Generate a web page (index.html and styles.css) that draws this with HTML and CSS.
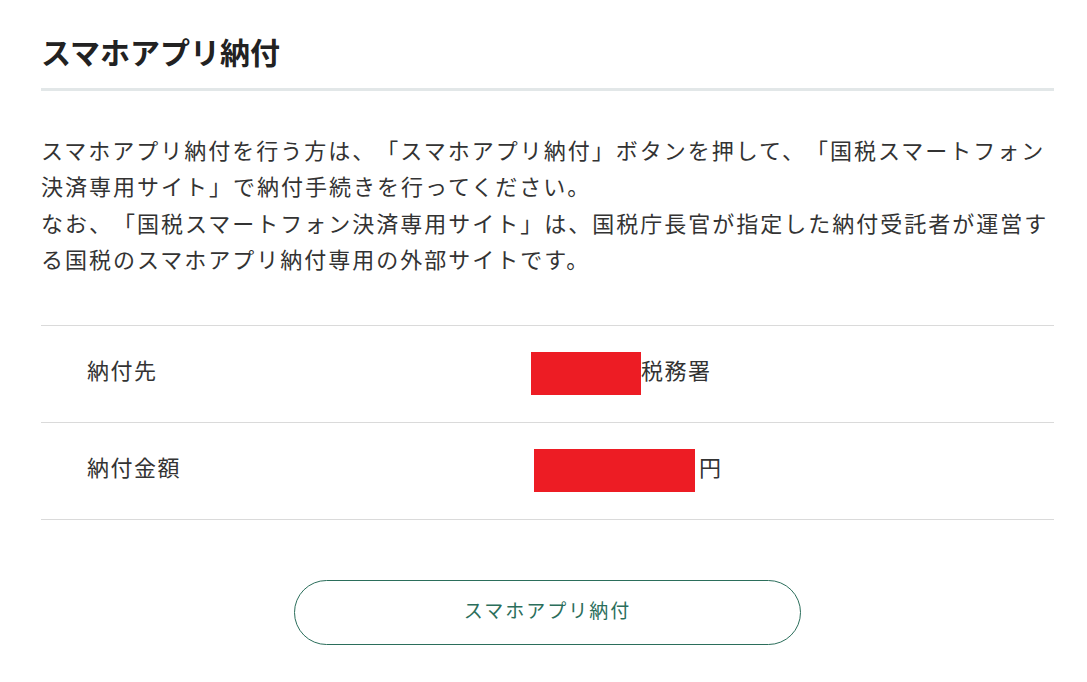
FILE: index.html
```html
<!DOCTYPE html>
<html lang="ja">
<head>
    <meta charset="UTF-8">
    <title>スマホアプリ納付</title>
    <link rel="stylesheet" href="styles.css">
</head>
<body>
    <div class="page">
        <h1 class="title">スマホアプリ納付</h1>
        <p class="lead">スマホアプリ納付を行う方は、「スマホアプリ納付」ボタンを押して、「国税スマートフォン決済専用サイト」で納付手続きを行ってください。<br>なお、「国税スマートフォン決済専用サイト」は、国税庁長官が指定した納付受託者が運営する国税のスマホアプリ納付専用の外部サイトです。</p>
        <div class="info">
            <div class="info-row">
                <div class="info-label">納付先</div>
                <div class="info-value"><span class="mask mask-office"></span><span class="unit">税務署</span></div>
            </div>
            <div class="info-row">
                <div class="info-label">納付金額</div>
                <div class="info-value"><span class="mask mask-amount"></span><span class="unit">円</span></div>
            </div>
        </div>
        <div class="actions">
            <button type="button" class="btn-app">スマホアプリ納付</button>
        </div>
    </div>
</body>
</html>
```

FILE: styles.css
```css
body {
    margin: 0;
    background: #fff;
    color: #222;
    font-family: "Noto Sans CJK JP", "Noto Sans", sans-serif;
    text-spacing-trim: space-all;
}
.page {
    width: 1013px;
    padding: 30px 0 0 41px;
}
.title {
    margin: 0;
    padding-bottom: 16px;
    border-bottom: 3px solid #e2e7e8;
    font-size: 30px;
    line-height: 42px;
    font-weight: bold;
    color: #222;
}
.lead {
    margin: 40px 0 0;
    font-size: 22px;
    letter-spacing: 2px;
    line-height: 36.4px;
    color: #333;
}
.info {
    margin-top: 48px;
    border-top: 1px solid #dadada;
}
.info-row {
    display: grid;
    grid-template-columns: 490px 1fr;
    align-items: center;
    height: 96px;
    border-bottom: 1px solid #dadada;
    font-size: 22px;
    letter-spacing: 1.5px;
    color: #333;
}
.info-label {
    padding-left: 46px;
    padding-bottom: 9px;
}
.info-value {
    display: flex;
    align-items: center;
}
.unit {
    padding-bottom: 9px;
}
.mask {
    display: inline-block;
    height: 43px;
    background: #ed1c24;
}
.mask-office {
    width: 110px;
}
.mask-amount {
    width: 161px;
    margin-left: 3px;
    margin-right: 4px;
}
.actions {
    display: flex;
    justify-content: center;
    margin-top: 60px;
}
.btn-app {
    width: 507px;
    height: 65px;
    padding-bottom: 7px;
    border: 1px solid #2b6e5b;
    border-radius: 33px;
    background: #fff;
    color: #2b6e5b;
    font-family: inherit;
    font-size: 19px;
    letter-spacing: 2px;
    cursor: pointer;
}
```
